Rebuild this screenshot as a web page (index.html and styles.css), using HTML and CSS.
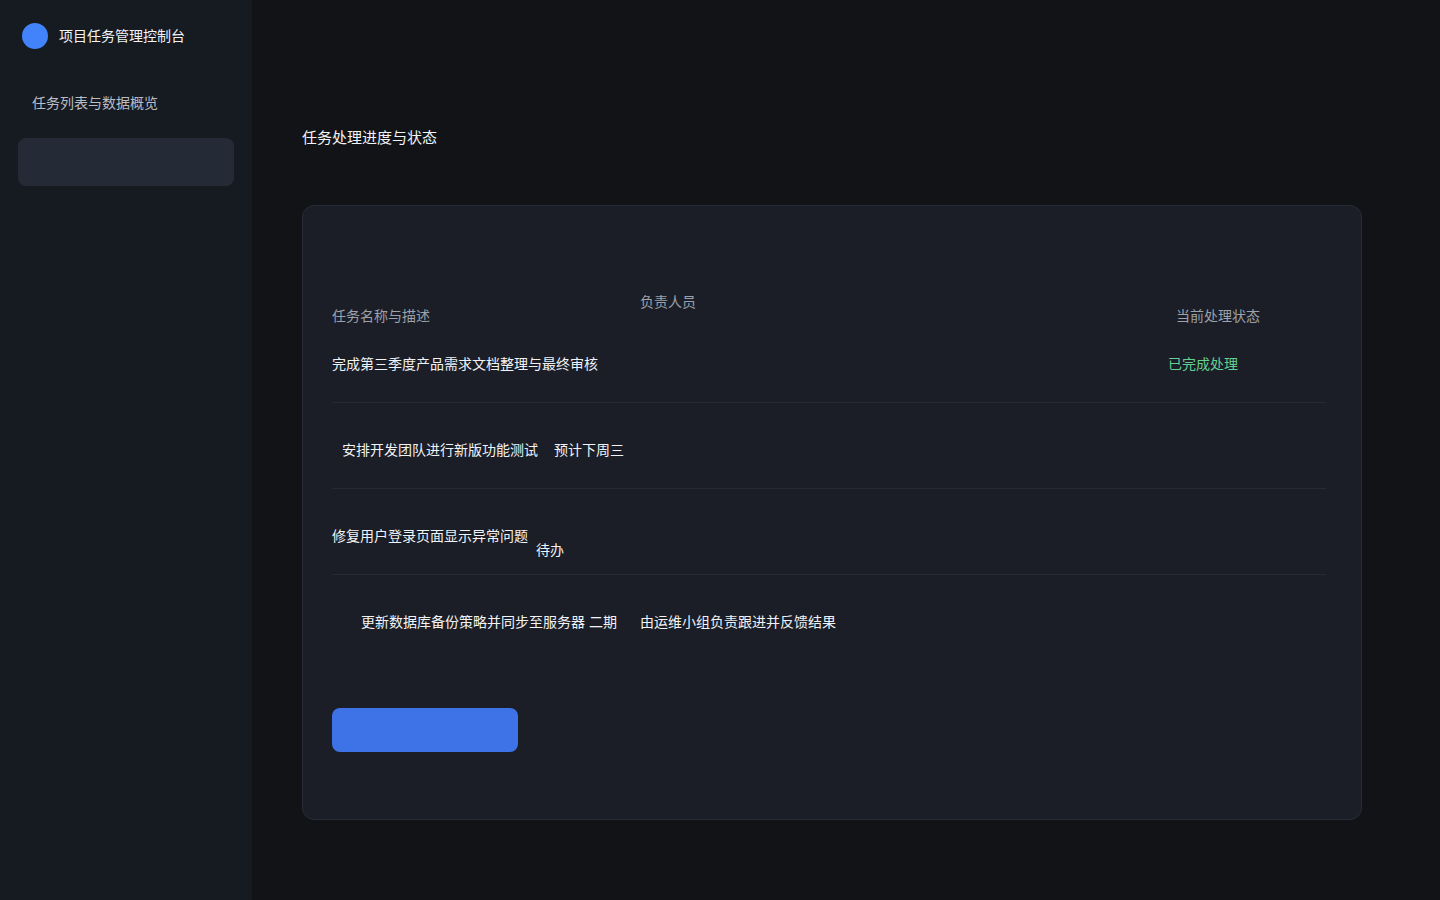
FILE: index.html
```html
<!DOCTYPE html>
<html lang="zh-CN">
<head>
  <meta charset="UTF-8">
  <meta name="viewport" content="width=device-width, initial-scale=1.0">
  <title>项目任务管理控制台</title>
  <link rel="stylesheet" href="styles.css">
</head>
<body>
  <div class="app">
    <aside class="sidebar">
      <div class="brand">
        <span class="brand-logo"></span>
        <span class="brand-name">项目任务管理控制台</span>
      </div>
      <nav class="nav">
        <a class="nav-item">任务列表与数据概览</a>
        <a class="nav-item active"></a>
      </nav>
    </aside>

    <main class="main">
      <h1 class="page-title">任务处理进度与状态</h1>

      <div class="card">
        <div class="table-head">
          <div class="col-name">任务名称与描述</div>
          <div class="col-owner">负责人员</div>
          <div class="col-status">当前处理状态</div>
        </div>

        <div class="row first">
          <div class="col-name">完成第三季度产品需求文档整理与最终审核</div>
          <div class="status-done">已完成处理</div>
        </div>

        <div class="row">
          <div class="cell-a">安排开发团队进行新版功能测试</div>
          <div class="cell-b">预计下周三</div>
        </div>

        <div class="row">
          <div class="cell-c">修复用户登录页面显示异常问题</div>
          <div class="cell-d">待办</div>
        </div>

        <div class="row last">
          <div class="cell-e">更新数据库备份策略并同步至服务器 二期</div>
          <div class="cell-f">由运维小组负责跟进并反馈结果</div>
        </div>

        <button class="primary-btn"></button>
      </div>
    </main>
  </div>
</body>
</html>
```

FILE: styles.css
```css
* {
  margin: 0;
  padding: 0;
  box-sizing: border-box;
  font-family: Inter, 'Noto Sans CJK SC', 'Noto Sans', sans-serif;
}

body {
  background-color: #111317;
  color: #f1f3f6;
}

.app {
  display: flex;
  min-height: 900px;
}

/* 侧边栏 */
.sidebar {
  width: 252px;
  flex-shrink: 0;
  background-color: #161a21;
  padding: 23px 18px;
}

.brand {
  display: flex;
  align-items: center;
  gap: 11px;
  padding-left: 4px;
}

.brand-logo {
  width: 26px;
  height: 26px;
  border-radius: 50%;
  background-color: #4282fa;
}

.brand-name {
  font-size: 14px;
  line-height: 20px;
  color: #f1f3f6;
}

.nav {
  display: flex;
  flex-direction: column;
  gap: 12px;
  margin-top: 29px;
}

.nav-item {
  display: flex;
  align-items: center;
  height: 48px;
  padding-left: 14px;
  border-radius: 8px;
  font-size: 14px;
  color: #b9bdc6;
}

.nav-item.active {
  background-color: #242a36;
}

/* 主内容 */
.main {
  flex: 1;
  padding: 128px 78px 0 50px;
}

.page-title {
  font-size: 15px;
  font-weight: 400;
  line-height: 20px;
  margin-bottom: 57px;
}

.card {
  background-color: #1b1e27;
  border: 1px solid #272b35;
  border-radius: 12px;
  padding: 100px 35px 67px 29px;
}

.table-head {
  display: flex;
  height: 20px;
  align-items: center;
  font-size: 14px;
  line-height: 20px;
  color: #9ca1ab;
}

.table-head .col-name {
  width: 308px;
}

.table-head .col-owner {
  width: 536px;
  align-self: flex-start;
  margin-top: -14px;
}

.row {
  display: flex;
  align-items: flex-start;
  padding: 37px 0 28px;
  border-bottom: 1px solid #252a33;
  font-size: 14px;
  line-height: 20px;
}

.row.first {
  padding-top: 28px;
}

.row.last {
  border-bottom: none;
}

.row .col-name {
  width: 836px;
}

.status-done {
  color: #63d193;
}

.cell-a {
  margin-left: 10px;
  width: 212px;
}

.cell-c {
  width: 204px;
  white-space: nowrap;
}

.cell-d {
  margin-top: 14px;
  margin-bottom: -14px;
}

.cell-e {
  margin-left: 29px;
  width: 279px;
  white-space: nowrap;
}

.primary-btn {
  display: block;
  width: 186px;
  height: 44px;
  margin-top: 48px;
  border: none;
  border-radius: 8px;
  background-color: #3d73e6;
  cursor: pointer;
}
```
